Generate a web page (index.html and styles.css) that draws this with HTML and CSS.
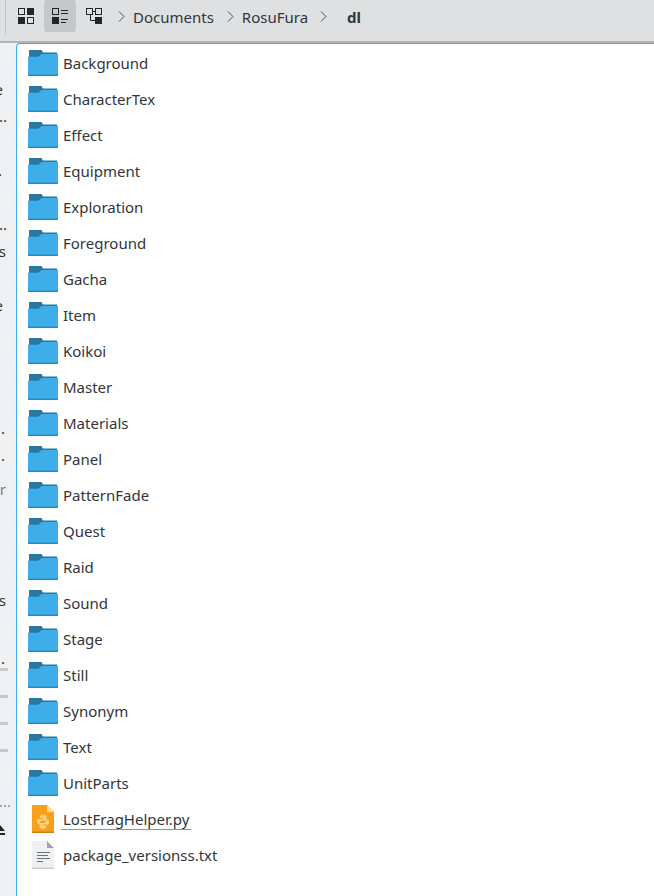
FILE: index.html
```html
<!DOCTYPE html>
<html lang="en">
<head>
    <meta charset="UTF-8">
    <title>dl - Dolphin</title>
    <link rel="stylesheet" href="styles.css">
</head>
<body>
    <svg class="defs" width="0" height="0">
        <symbol id="folder" viewBox="0 0 30 27">
            <path d="M1 1H13.6L15 3.5H29V9H1Z" fill="#2a77a2"/>
            <path d="M0 7.7H10.3L13.6 5H30V27H0Z" fill="#3daee9"/>
            <rect y="25.6" width="30" height="1.4" fill="#2c88bd"/>
        </symbol>
    </svg>

    <header class="toolbar">
        <div class="sep"></div>
        <button class="tool">
            <svg width="16" height="16" viewBox="0 0 16 16">
                <rect x="0.5" y="0.5" width="6" height="6" fill="none" stroke="#232629"/>
                <rect x="9" y="0" width="7" height="7" fill="#232629"/>
                <rect x="0" y="9" width="7" height="7" fill="#232629"/>
                <rect x="9.5" y="9.5" width="6" height="6" fill="none" stroke="#232629"/>
            </svg>
        </button>
        <button class="tool active">
            <svg width="16" height="16" viewBox="0 0 16 16">
                <rect x="0.5" y="0.5" width="6" height="6" fill="none" stroke="#232629"/>
                <rect x="0" y="9" width="7" height="7" fill="#232629"/>
                <path d="M9 2.5H16M9 5.5H16M9 11.5H16M9 14.5H14" stroke="#232629" fill="none"/>
            </svg>
        </button>
        <button class="tool">
            <svg width="16" height="16" viewBox="0 0 16 16">
                <rect x="0.5" y="0.5" width="6" height="6" fill="none" stroke="#232629"/>
                <rect x="9.5" y="0.5" width="6" height="6" fill="none" stroke="#232629"/>
                <path d="M7 3.5H9M4.5 7V12.5H9" stroke="#232629" fill="none"/>
                <rect x="9" y="9" width="7" height="7" fill="#232629"/>
            </svg>
        </button>
        <nav class="crumbs">
            <svg class="chev" width="7" height="11" viewBox="0 0 7 11"><path d="M1 0.5L6 5.5L1 10.5" fill="none" stroke="#4d5154"/></svg>
            <span class="crumb docs">Documents</span>
            <svg class="chev" width="7" height="11" viewBox="0 0 7 11"><path d="M1 0.5L6 5.5L1 10.5" fill="none" stroke="#4d5154"/></svg>
            <span class="crumb rosu">RosuFura</span>
            <svg class="chev" width="7" height="11" viewBox="0 0 7 11"><path d="M1 0.5L6 5.5L1 10.5" fill="none" stroke="#4d5154"/></svg>
            <span class="crumb current">dl</span>
        </nav>
    </header>

    <div class="content">
        <aside class="sidebar">
            <div class="group first">
                <div class="place"></div>
                <div class="place"><span class="tail-e">e</span></div>
                <div class="place"><span class="tail-dots">..</span></div>
                <div class="place"></div>
                <div class="place"><span class="tail-dot">.</span></div>
                <div class="place"></div>
                <div class="place"><span class="tail-dots">..</span></div>
                <div class="place"><span class="tail-s">s</span></div>
                <div class="place"></div>
                <div class="place"><span class="tail-e">e</span></div>
            </div>
            <div class="group second">
                <div class="place"><span class="tail-dot2">.</span></div>
                <div class="place"><span class="tail-dot2">.</span></div>
            </div>
            <div class="group third">
                <div class="place muted"><span class="tail-r">r</span></div>
            </div>
            <div class="group fourth">
                <div class="place"><span class="tail-s">s</span></div>
            </div>
            <div class="group devices">
                <div class="place device"><span class="tail-dot2">.</span><i class="usage"></i></div>
                <div class="place device"><i class="usage"></i></div>
                <div class="place device"><i class="usage"></i></div>
                <div class="place device"><i class="usage"></i></div>
            </div>
            <div class="more">
                <i></i><i></i><i></i>
                <svg class="eject" width="6" height="11" viewBox="0 0 6 11"><path d="M0 0L5 6H0Z" fill="#232629"/><rect y="8" width="5" height="2" fill="#232629"/></svg>
            </div>
        </aside>

        <main class="files">
            <div class="row"><svg class="folder"><use href="#folder"/></svg><span>Background</span></div>
            <div class="row"><svg class="folder"><use href="#folder"/></svg><span>CharacterTex</span></div>
            <div class="row"><svg class="folder"><use href="#folder"/></svg><span>Effect</span></div>
            <div class="row"><svg class="folder"><use href="#folder"/></svg><span>Equipment</span></div>
            <div class="row"><svg class="folder"><use href="#folder"/></svg><span>Exploration</span></div>
            <div class="row"><svg class="folder"><use href="#folder"/></svg><span>Foreground</span></div>
            <div class="row"><svg class="folder"><use href="#folder"/></svg><span>Gacha</span></div>
            <div class="row"><svg class="folder"><use href="#folder"/></svg><span>Item</span></div>
            <div class="row"><svg class="folder"><use href="#folder"/></svg><span>Koikoi</span></div>
            <div class="row"><svg class="folder"><use href="#folder"/></svg><span>Master</span></div>
            <div class="row"><svg class="folder"><use href="#folder"/></svg><span>Materials</span></div>
            <div class="row"><svg class="folder"><use href="#folder"/></svg><span>Panel</span></div>
            <div class="row"><svg class="folder"><use href="#folder"/></svg><span>PatternFade</span></div>
            <div class="row"><svg class="folder"><use href="#folder"/></svg><span>Quest</span></div>
            <div class="row"><svg class="folder"><use href="#folder"/></svg><span>Raid</span></div>
            <div class="row"><svg class="folder"><use href="#folder"/></svg><span>Sound</span></div>
            <div class="row"><svg class="folder"><use href="#folder"/></svg><span>Stage</span></div>
            <div class="row"><svg class="folder"><use href="#folder"/></svg><span>Still</span></div>
            <div class="row"><svg class="folder"><use href="#folder"/></svg><span>Synonym</span></div>
            <div class="row"><svg class="folder"><use href="#folder"/></svg><span>Text</span></div>
            <div class="row"><svg class="folder"><use href="#folder"/></svg><span>UnitParts</span></div>
            <div class="row">
                <svg class="doc" width="22" height="28" viewBox="0 0 22 28">
                    <path d="M0 0H15L22 7V28H0Z" fill="#f89f1c"/>
                    <path d="M15 0L22 7H15Z" fill="#fcdc9c"/>
                    <rect y="26.6" width="22" height="1.4" fill="#c67c12"/>
                    <path d="M11 9.5C8.5 9.5 7.8 10.4 7.8 12V13H11.2V14H6.8C5.3 14 5 15.2 5 16.6C5 18 5.6 19 7 19H8V17.6C8 16.3 9 15.6 10.3 15.6H13C14 15.6 14.6 15 14.6 14V12C14.6 10.4 13.2 9.5 11 9.5Z" fill="#fcd28a"/>
                    <path d="M11 24C13.5 24 14.2 23.1 14.2 21.5V20.5H10.8V19.5H15.2C16.7 19.5 17 18.3 17 16.9C17 15.5 16.4 14.5 15 14.5H14V15.9C14 17.2 13 17.9 11.7 17.9H9C8 17.9 7.4 18.5 7.4 19.5V21.5C7.4 23.1 8.8 24 11 24Z" fill="#fcd28a"/>
                </svg>
                <span class="current-file">LostFragHelper.py</span>
            </div>
            <div class="row">
                <svg class="doc" width="22" height="28" viewBox="0 0 22 28">
                    <path d="M0 0H15L22 7V28H0Z" fill="#eff0f1"/>
                    <path d="M15 0L22 7H15Z" fill="#a3a5a7"/>
                    <rect y="26.6" width="22" height="1.4" fill="#c6c8ca"/>
                    <path d="M5 11.5H18M5 14.5H16M5 17.5H18M5 20.5H11" stroke="#6d7072" fill="none"/>
                </svg>
                <span>package_versionss.txt</span>
            </div>
        </main>
    </div>
</body>
</html>
```

FILE: styles.css
```css
* {
    box-sizing: border-box;
}
html, body {
    height: 100%;
}
body {
    margin: 0;
    display: flex;
    flex-direction: column;
    height: 896px;
    overflow: hidden;
    font-family: "Noto Sans", sans-serif;
    font-size: 15px;
    color: #31363b;
    background-color: #eff0f1;
}
.defs {
    position: absolute;
}

/* toolbar */
.toolbar {
    display: flex;
    height: 43px;
    flex: none;
    padding-left: 5px;
    background-color: #dee0e2;
    border-bottom: 2px solid #b1b3b5;
}
.sep {
    width: 1px;
    height: 35px;
    margin-right: 4px;
    background-color: #c3c5c7;
}
.tool {
    display: flex;
    align-items: flex-start;
    justify-content: center;
    width: 32px;
    height: 32px;
    padding: 8px 0 0;
    border: 0;
    background: none;
}
.tool + .tool {
    margin-left: 2px;
}
.tool.active {
    background-color: #c4c8cc;
    border-radius: 3px;
}
.crumbs {
    display: flex;
    align-items: center;
    height: 33px;
    padding-left: 8px;
}
.crumb.docs {
    margin: 0 13px 0 8px;
}
.crumb.rosu {
    margin: 0 12px 0 8px;
}
.crumb.current {
    margin-left: 20px;
    font-weight: 700;
}

/* places panel, cut off by the window edge */
.content {
    display: flex;
    flex: 1;
    min-height: 0;
}
.sidebar {
    width: 16px;
    flex: none;
    overflow: hidden;
    line-height: 27px;
}
.group.first {
    margin-top: 6px;
}
.group.second {
    margin-top: 96px;
}
.group.third {
    margin-top: 7px;
}
.group.fourth {
    margin-top: 84px;
}
.group.devices {
    margin-top: 31px;
}
.place {
    position: relative;
    display: flex;
    justify-content: flex-end;
    height: 27px;
    white-space: nowrap;
}
.place.muted {
    color: #7c7f82;
}
.tail-e { margin-right: 13px; }
.tail-s { margin-right: 10px; }
.tail-r { margin-right: 10px; }
.tail-dots { margin-right: 9px; }
.tail-dot { margin-right: 14px; }
.tail-dot2 { margin-right: 11px; }
.usage {
    position: absolute;
    left: 0;
    bottom: 1px;
    width: 8px;
    height: 3px;
    background-color: #c6c8ca;
}
.more {
    position: relative;
    display: flex;
    gap: 2px;
    margin-top: 52px;
}
.more i {
    width: 2px;
    height: 2px;
    background-color: #a4a6a8;
}
.eject {
    position: absolute;
    left: 0;
    top: 20px;
}

/* file list */
.files {
    flex: 1;
    min-width: 0;
    padding: 1px 0 0 11px;
    background-color: #fff;
    border-left: 1px solid #3daee9;
    border-top: 1px solid #3daee9;
    border-top-left-radius: 4px;
}
.row {
    display: flex;
    align-items: center;
    height: 36px;
}
.folder {
    width: 30px;
    height: 27px;
    flex: none;
    align-self: flex-start;
    margin: 4px 5px 0 0;
}
.doc {
    flex: none;
    margin: 0 9px 0 4px;
}
.current-file {
    margin-left: -2px;
    padding: 0 2px 0 2px;
    line-height: 20px;
    border-bottom: 1px solid #3daee9;
}
```
